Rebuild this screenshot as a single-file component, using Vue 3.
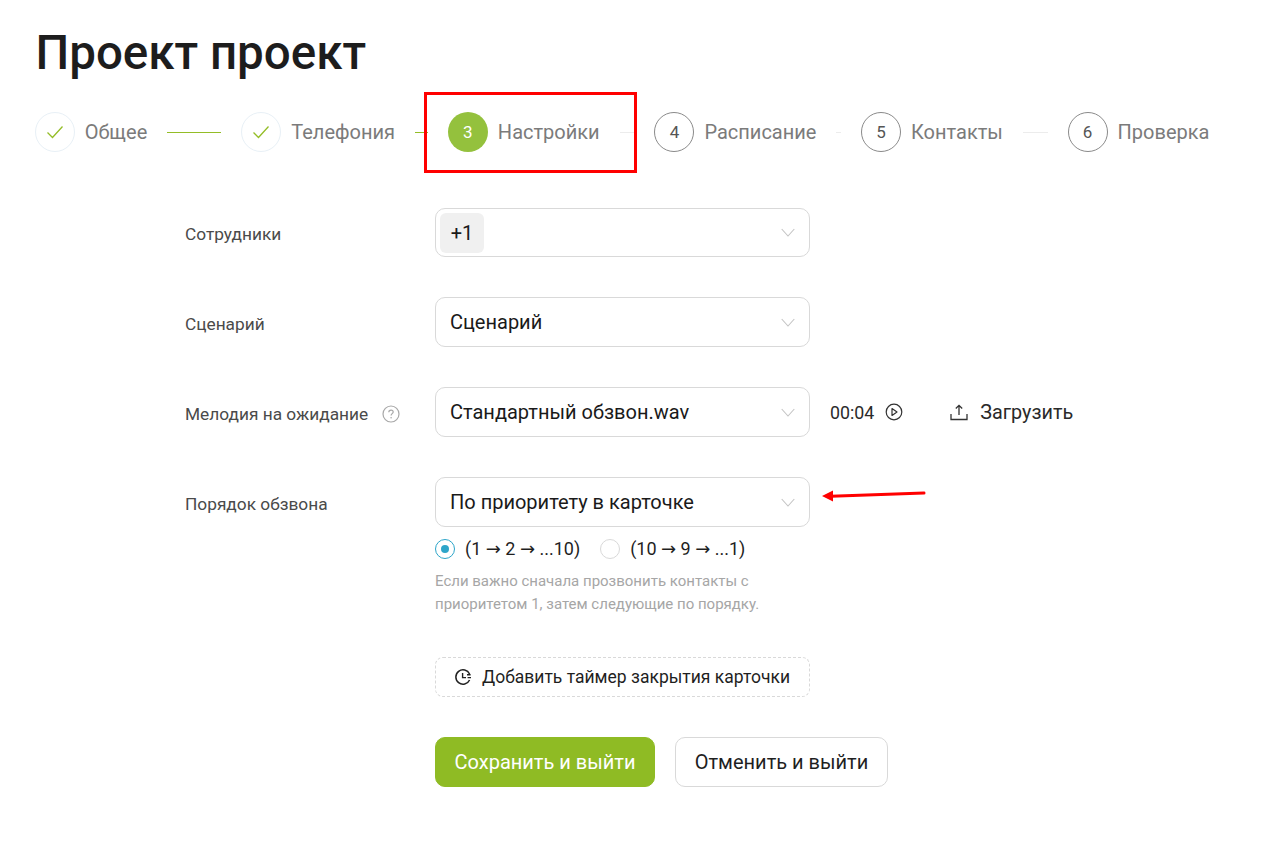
<script setup>
const steps = [
  { label: 'Общее', state: 'done', line: 'on' },
  { label: 'Телефония', state: 'done', line: 'on' },
  { label: 'Настройки', state: 'active', num: 3 },
  { label: 'Расписание', state: 'todo', num: 4 },
  { label: 'Контакты', state: 'todo', num: 5 },
  { label: 'Проверка', state: 'todo', num: 6 },
]
</script>

<template>
  <div class="page">
    <h1 class="title">Проект проект</h1>

    <div class="stepper">
      <div v-for="(s, i) in steps" :key="s.label" class="step" :class="{ last: i === steps.length - 1 }">
        <span class="circle" :class="s.state">
          <svg v-if="s.state === 'done'" width="18" height="14" viewBox="0 0 18 14" fill="none">
            <path d="M1.5 7.5 6.5 12.5 16.5 1.5" stroke="#94bd27" stroke-width="1.3" />
          </svg>
          <template v-else>{{ s.num }}</template>
        </span>
        <span class="step-label">{{ s.label }}</span>
        <span v-if="i < steps.length - 1" class="line" :class="s.line"></span>
      </div>
    </div>

    <div class="form">
      <div class="row first">
        <div class="label">Сотрудники</div>
        <div class="select chip-select">
          <span class="chip">+1</span>
          <svg class="chev" width="14" height="9" viewBox="0 0 14 9" fill="none"><path d="M.7 1 7 8 13.3 1" stroke="#c4c4c4" stroke-width="1.1" /></svg>
        </div>
      </div>

      <div class="row">
        <div class="label">Сценарий</div>
        <div class="select">
          <span>Сценарий</span>
          <svg class="chev" width="14" height="9" viewBox="0 0 14 9" fill="none"><path d="M.7 1 7 8 13.3 1" stroke="#c4c4c4" stroke-width="1.1" /></svg>
        </div>
      </div>

      <div class="row">
        <div class="label">
          Мелодия на ожидание
          <svg class="help" width="18" height="18" viewBox="0 0 18 18" fill="none">
            <circle cx="9" cy="9" r="8" stroke="#a8a8a8" stroke-width="1.2" />
            <path d="M6.8 7.2c0-1.3 1-2.1 2.3-2.1 1.2 0 2.1.8 2.1 1.9 0 1.6-2.1 1.7-2.1 3.4" stroke="#a8a8a8" stroke-width="1.2" />
            <circle cx="9.1" cy="12.8" r=".8" fill="#a8a8a8" />
          </svg>
        </div>
        <div class="select">
          <span>Стандартный обзвон.wav</span>
          <svg class="chev" width="14" height="9" viewBox="0 0 14 9" fill="none"><path d="M.7 1 7 8 13.3 1" stroke="#c4c4c4" stroke-width="1.1" /></svg>
        </div>
        <div class="extras">
          <span class="time">00:04</span>
          <svg class="play" width="18" height="18" viewBox="0 0 18 18" fill="none">
            <circle cx="9" cy="9" r="7.8" stroke="#333" stroke-width="1.2" />
            <path d="M7 5.6 12 9 7 12.4Z" stroke="#333" stroke-width="1.2" stroke-linejoin="round" />
          </svg>
          <svg class="upload" width="18" height="18" viewBox="0 0 18 18" fill="none">
            <path d="M9 12V2.500M5.800 5.500 9 2.300l3.200 3.200M1 11v5.500h16V11" stroke="#333" stroke-width="1.300" />
          </svg>
          <span class="upload-text">Загрузить</span>
        </div>
      </div>

      <div class="row">
        <div class="label">Порядок обзвона</div>
        <div class="select">
          <span>По приоритету в карточке</span>
          <svg class="chev" width="14" height="9" viewBox="0 0 14 9" fill="none"><path d="M.7 1 7 8 13.3 1" stroke="#c4c4c4" stroke-width="1.1" /></svg>
        </div>
      </div>

      <div class="sub">
        <div class="radios">
          <span class="radio on"></span>
          <span class="radio-text">(1 <span class="arr">→</span> 2 <span class="arr">→</span> ...10)</span>
          <span class="radio"></span>
          <span class="radio-text">(10 <span class="arr">→</span> 9 <span class="arr">→</span> ...1)</span>
        </div>
        <p class="hint">Если важно сначала прозвонить контакты с<br />приоритетом 1, затем следующие по порядку.</p>
        <div class="timer">
          <svg width="18" height="18" viewBox="0 0 18 18" fill="none">
            <path d="M15.6 6A7.2 7.2 0 1 0 15.6 12" stroke="#222" stroke-width="1.500" />
            <path d="M8.600 5v4.600h3.400M13 6.800h3.600M13.600 9.600h3.400" stroke="#222" stroke-width="1.400" />
          </svg>
          <span>Добавить таймер закрытия карточки</span>
        </div>
        <div class="actions">
          <button class="btn primary">Сохранить и выйти</button>
          <button class="btn secondary">Отменить и выйти</button>
        </div>
      </div>
    </div>

    <div class="mark-box"></div>
    <svg class="mark-arrow" width="106" height="14" viewBox="0 0 106 14" fill="none">
      <path d="M10 8.200 103 5" stroke="#f00" stroke-width="3" stroke-linecap="round" />
      <path d="M1 8 12 2.500 12 13.500Z" fill="#f00" />
    </svg>
  </div>
</template>

<style>
html, body { margin: 0; background: #fff; }
</style>

<style scoped>
.page {
  position: relative;
  width: 1269px;
  height: 844px;
  box-sizing: border-box;
  padding: 23px 0 0 35px;
  font-family: Roboto, "Liberation Sans", sans-serif;
  color: #1f1f1f;
  overflow: hidden;
}
.title {
  margin: 0 0 0 .5px;
  font-size: 47.5px;
  line-height: 60px;
  font-weight: 500;
  color: #1d1d1d;
}
.stepper {
  display: flex;
  align-items: center;
  width: 1174.75px;
  margin: 29px 0 0 -.3px;
}
.step {
  flex: 1 1 0;
  min-width: 0;
  display: flex;
  align-items: center;
}
.step.last { flex: 0 0 auto; }
.circle {
  flex: none;
  width: 40px;
  height: 40px;
  box-sizing: border-box;
  border-radius: 50%;
  display: flex;
  align-items: center;
  justify-content: center;
  font-size: 17px;
  color: #555;
}
.circle.done { border: 1px solid #e8f0f6; }
.circle.active { background: #94c13d; color: #fff; }
.circle.todo { border: 1px solid #8a8a8a; }
.step-label {
  margin-left: 10px;
  font-size: 20px;
  line-height: 24px;
  color: #7b7b7b;
  white-space: nowrap;
}
.line {
  flex: 1;
  height: 1px;
  margin: 0 20px;
  background: #ececec;
}
.line.on { background: #94bd27; }
.form {
  margin: 56px 0 0 150px;
}
.row {
  display: flex;
  align-items: center;
  height: 50px;
  margin-bottom: 40px;
}
.row.first { height: 49px; }
.row:has(+ .sub) { margin-bottom: 0; }
.label {
  width: 250px;
  flex: none;
  box-sizing: border-box;
  padding-top: 3px;
  display: flex;
  align-items: center;
  font-size: 17.3px;
  color: #4a4a4a;
}
.help { margin-left: 14px; }
.select {
  width: 375px;
  height: 100%;
  flex: none;
  box-sizing: border-box;
  border: 1px solid #d9d9d9;
  border-radius: 10px;
  display: flex;
  align-items: center;
  justify-content: space-between;
  padding: 0 14px;
  font-size: 20px;
  color: #1a1a1a;
}
.chip-select { padding-left: 4px; }
.chip {
  width: 44px;
  height: 40px;
  border-radius: 6px;
  background: #f0f0f0;
  display: flex;
  align-items: center;
  justify-content: center;
}
.extras {
  display: flex;
  align-items: center;
  margin-left: 20px;
  font-size: 17.8px;
  color: #2a2a2a;
}
.play { margin-left: 11px; }
.upload { margin-left: 47px; }
.upload-text { margin-left: 12px; font-size: 19.8px; }
.sub { margin-left: 250px; }
.radios {
  display: flex;
  align-items: center;
  margin-top: 12px;
  height: 20px;
  font-size: 18px;
  color: #1f1f1f;
}
.arr { font-family: "DejaVu Sans", sans-serif; line-height: 1; }
.radio {
  width: 20px;
  height: 20px;
  box-sizing: border-box;
  border: 1px solid #d9d9d9;
  border-radius: 50%;
  flex: none;
  position: relative;
}
.radio.on { border-color: #2da5c9; }
.radio.on::after {
  content: "";
  position: absolute;
  left: 5px;
  top: 5px;
  width: 8px;
  height: 8px;
  border-radius: 50%;
  background: #2da5c9;
}
.radio-text { margin: 0 20px 0 10px; line-height: 20px; }
.hint {
  margin: 11px 0 0;
  font-size: 15px;
  line-height: 23px;
  color: #a6a6a6;
}
.timer {
  width: 375px;
  height: 40px;
  box-sizing: border-box;
  margin-top: 41px;
  border: 1px dashed #d9d9d9;
  border-radius: 8px;
  padding-left: 18px;
  display: flex;
  align-items: center;
  gap: 10px;
  font-size: 17.5px;
  color: #1f1f1f;
}
.actions {
  display: flex;
  gap: 20px;
  margin-top: 40px;
}
.btn {
  height: 50px;
  padding: 0;
  border: 1px solid #d9d9d9;
  border-radius: 10px;
  background: #fff;
  font-family: inherit;
  font-size: 20px;
  color: #1f1f1f;
}
.btn.primary {
  width: 220px;
  background: #8fbb24;
  border-color: #8fbb24;
  color: #fff;
}
.btn.secondary { width: 213px; }
.mark-box {
  position: absolute;
  left: 424px;
  top: 92px;
  width: 213px;
  height: 81px;
  box-sizing: border-box;
  border: 3.5px solid #f00;
}
.mark-arrow {
  position: absolute;
  left: 821px;
  top: 488px;
}
</style>
